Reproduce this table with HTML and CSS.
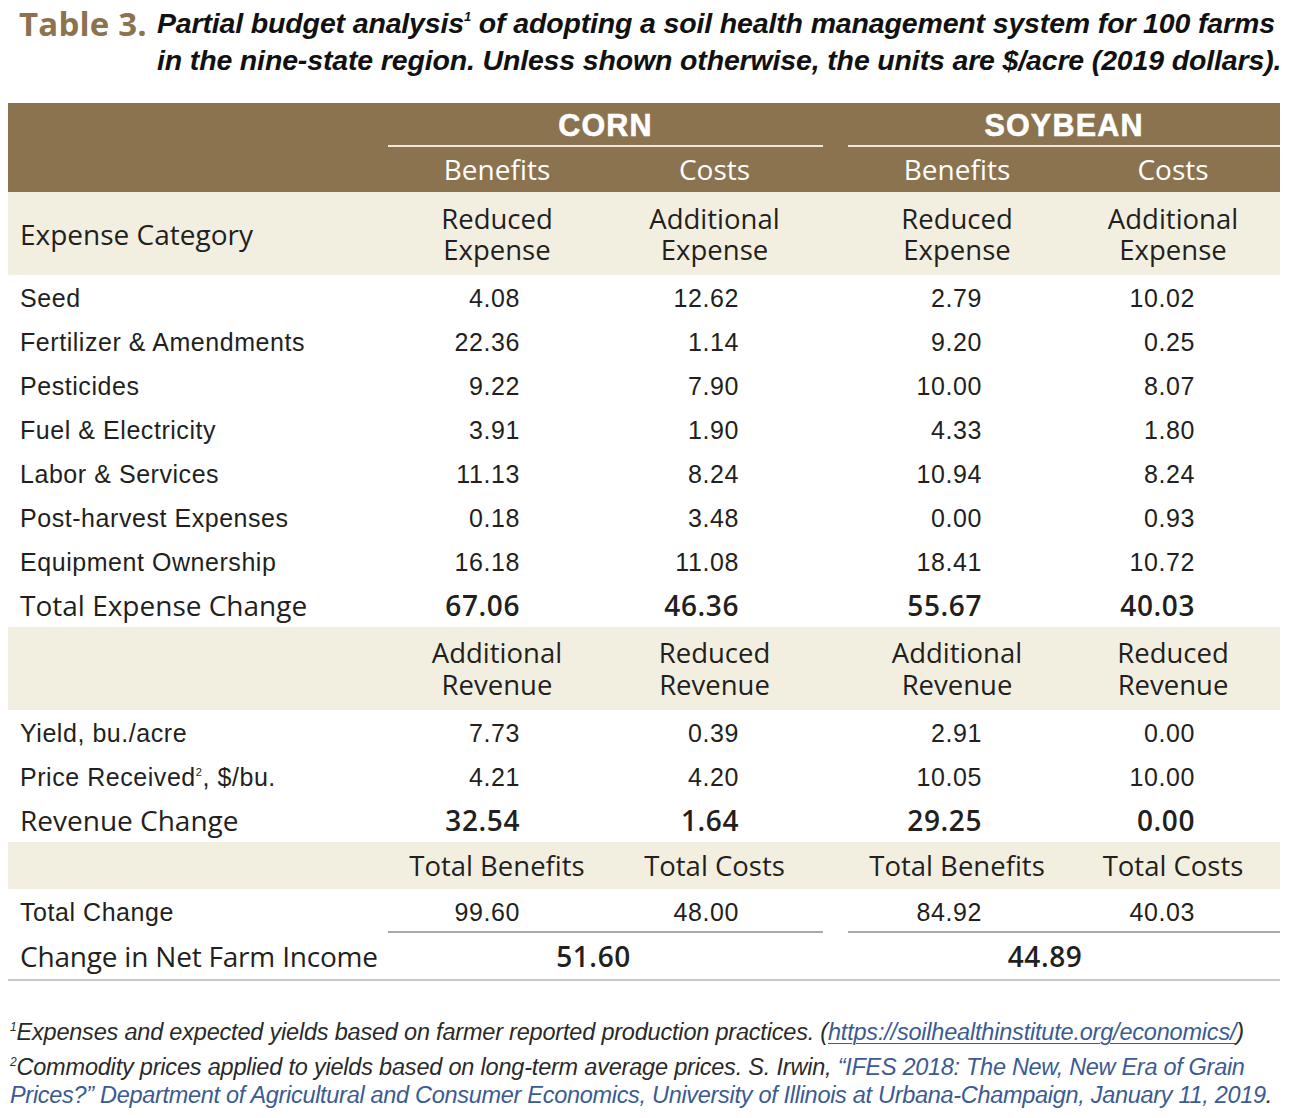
FILE: index.html
```html
<!DOCTYPE html>
<html lang="en">
<head>
<meta charset="utf-8">
<title>Table 3. Partial budget analysis</title>
<link rel="stylesheet" href="styles.css">
</head>
<body>
<div class="page">
  <header class="caption">
    <span class="caption-label">Table 3.</span>
    <span class="caption-text">
      <span class="caption-line">Partial budget analysis<sup>1</sup> of adopting a soil health management system for 100 farms</span>
      <span class="caption-line">in the nine-state region. Unless shown otherwise, the units are $/acre (2019 dollars).</span>
    </span>
  </header>

  <table class="budget">
    <colgroup>
      <col class="c-label">
      <col class="c-num1">
      <col class="c-num2">
      <col class="c-gap">
      <col class="c-num3">
      <col class="c-num4">
    </colgroup>
    <thead>
      <tr class="crop-row">
        <th></th>
        <th colspan="2" class="crop">CORN</th>
        <th></th>
        <th colspan="2" class="crop">SOYBEAN</th>
      </tr>
      <tr class="sub-row">
        <th></th>
        <th>Benefits</th>
        <th>Costs</th>
        <th></th>
        <th>Benefits</th>
        <th>Costs</th>
      </tr>
    </thead>
    <tbody>
      <tr class="band band-tall">
        <td class="label">Expense Category</td>
        <td>Reduced<br>Expense</td>
        <td>Additional<br>Expense</td>
        <td></td>
        <td>Reduced<br>Expense</td>
        <td>Additional<br>Expense</td>
      </tr>
      <tr class="data"><td class="label">Seed</td><td class="n1">4.08</td><td class="n2">12.62</td><td></td><td class="n3">2.79</td><td class="n4">10.02</td></tr>
      <tr class="data"><td class="label">Fertilizer &amp; Amendments</td><td class="n1">22.36</td><td class="n2">1.14</td><td></td><td class="n3">9.20</td><td class="n4">0.25</td></tr>
      <tr class="data"><td class="label">Pesticides</td><td class="n1">9.22</td><td class="n2">7.90</td><td></td><td class="n3">10.00</td><td class="n4">8.07</td></tr>
      <tr class="data"><td class="label">Fuel &amp; Electricity</td><td class="n1">3.91</td><td class="n2">1.90</td><td></td><td class="n3">4.33</td><td class="n4">1.80</td></tr>
      <tr class="data"><td class="label">Labor &amp; Services</td><td class="n1">11.13</td><td class="n2">8.24</td><td></td><td class="n3">10.94</td><td class="n4">8.24</td></tr>
      <tr class="data"><td class="label">Post-harvest Expenses</td><td class="n1">0.18</td><td class="n2">3.48</td><td></td><td class="n3">0.00</td><td class="n4">0.93</td></tr>
      <tr class="data"><td class="label">Equipment Ownership</td><td class="n1">16.18</td><td class="n2">11.08</td><td></td><td class="n3">18.41</td><td class="n4">10.72</td></tr>
      <tr class="data total"><td class="label">Total Expense Change</td><td class="n1">67.06</td><td class="n2">46.36</td><td></td><td class="n3">55.67</td><td class="n4">40.03</td></tr>

      <tr class="band band-tall band-rev">
        <td class="label"></td>
        <td>Additional<br>Revenue</td>
        <td>Reduced<br>Revenue</td>
        <td></td>
        <td>Additional<br>Revenue</td>
        <td>Reduced<br>Revenue</td>
      </tr>
      <tr class="data"><td class="label">Yield, bu./acre</td><td class="n1">7.73</td><td class="n2">0.39</td><td></td><td class="n3">2.91</td><td class="n4">0.00</td></tr>
      <tr class="data"><td class="label">Price Received<sup>2</sup>, $/bu.</td><td class="n1">4.21</td><td class="n2">4.20</td><td></td><td class="n3">10.05</td><td class="n4">10.00</td></tr>
      <tr class="data total"><td class="label">Revenue Change</td><td class="n1">32.54</td><td class="n2">1.64</td><td></td><td class="n3">29.25</td><td class="n4">0.00</td></tr>

      <tr class="band band-short">
        <td class="label"></td>
        <td>Total Benefits</td>
        <td>Total Costs</td>
        <td></td>
        <td>Total Benefits</td>
        <td>Total Costs</td>
      </tr>
      <tr class="data change"><td class="label">Total Change</td><td class="n1 ruled">99.60</td><td class="n2 ruled">48.00</td><td></td><td class="n3 ruled">84.92</td><td class="n4 ruled">40.03</td></tr>
      <tr class="net"><td class="label">Change in Net Farm Income</td><td colspan="2" class="net-corn">51.60</td><td></td><td colspan="2" class="net-soy">44.89</td></tr>
    </tbody>
  </table>

  <footer class="notes">
    <p class="note"><sup>1</sup>Expenses and expected yields based on farmer reported production practices. (<a class="link underline" href="#">https://soilhealthinstitute.org/economics/</a>)</p>
    <p class="note"><sup>2</sup>Commodity prices applied to yields based on long-term average prices. S. Irwin, <span class="link">“IFES 2018: The New, New Era of Grain<br>Prices?” Department of Agricultural and Consumer Economics, University of Illinois at Urbana-Champaign, January 11, 2019</span>.</p>
  </footer>
</div>
</body>
</html>
```

FILE: styles.css
```css
html, body {
  margin: 0;
  padding: 0;
  background: #ffffff;
}

body {
  color: #231f20;
  font-family: "Liberation Sans", Arial, sans-serif;
}

.page {
  width: 1290px;
  padding: 0 8px;
  box-sizing: border-box;
}

/* Caption */
.caption {
  display: flex;
  align-items: flex-start;
  height: 103px;
  padding-top: 5px;
  box-sizing: border-box;
}

.caption-label {
  font-family: "Open Sans", sans-serif;
  font-weight: 700;
  font-size: 33px;
  line-height: 37px;
  height: 37px;
  color: #8b734f;
  padding-left: 11px;
  width: 138px;
  flex: none;
  white-space: nowrap;
  letter-spacing: 0.2px;
}

.caption-text {
  display: flex;
  flex-direction: column;
  font-family: "Liberation Sans", sans-serif;
  font-style: italic;
  font-weight: 700;
  font-size: 28.5px;
  color: #111;
  white-space: nowrap;
  letter-spacing: -0.15px;
}

.caption-line {
  display: block;
  height: 37px;
  line-height: 37px;
}

.caption-text sup {
  font-size: 13px;
  line-height: 0;
  vertical-align: 0;
  position: relative;
  top: -12px;
}

/* Table */
.budget {
  width: 1272px;
  table-layout: fixed;
  border-collapse: collapse;
  border-spacing: 0;
}

.c-label { width: 380px; }
.c-num1 { width: 218px; }
.c-num2 { width: 217px; }
.c-gap { width: 25px; }
.c-num3 { width: 218px; }
.c-num4 { width: 214px; }

.budget th,
.budget td {
  padding: 0;
  border: 0;
  line-height: 1.2;
  box-sizing: border-box;
}

.budget thead th {
  background: #8b734f;
  color: #ffffff;
  font-weight: 400;
  text-align: center;
  vertical-align: middle;
}

.crop-row th {
  height: 44px;
}

.budget thead .crop-row th.crop {
  font-family: "Liberation Sans", sans-serif;
  font-weight: 700;
  font-size: 30.5px;
  letter-spacing: 1.2px;
  -webkit-text-stroke: 0.6px #ffffff;
  background: linear-gradient(#eee8da, #eee8da) left bottom / 100% 2px no-repeat, #8b734f;
  padding-top: 1px;
}

.sub-row th {
  height: 45px;
  font-family: "Open Sans", sans-serif;
  font-size: 28px;
}

/* beige bands */
.band td {
  background: #f3efe0;
  font-family: "Open Sans", sans-serif;
  font-size: 27.5px;
  text-align: center;
  vertical-align: middle;
}

.band-tall td {
  height: 83px;
  line-height: 31px;
}

.band-rev td {
  line-height: 32px;
}

.band-short td {
  height: 47px;
  line-height: 34px;
}

.band td.label {
  text-align: left;
  padding-left: 12px;
  padding-top: 2px;
  font-size: 28px;
}

/* data rows */
.data td {
  height: 44px;
  font-size: 25px;
  letter-spacing: 0.6px;
  vertical-align: middle;
  color: #231f20;
  padding-top: 1px;
}

.data td.label {
  padding-left: 12px;
  white-space: nowrap;
  letter-spacing: 0.55px;
}

.data sup {
  font-size: 11px;
  line-height: 0;
  vertical-align: 0;
  position: relative;
  top: -10px;
}

.n1 { text-align: right; padding-right: 86px !important; }
.n2 { text-align: right; padding-right: 84px !important; }
.n3 { text-align: right; padding-right: 84px !important; }
.n4 { text-align: right; padding-right: 85px !important; }

.data.total td {
  font-family: "Open Sans", sans-serif;
  font-size: 28px;
  font-weight: 400;
  letter-spacing: 0;
}

.data.total td.n1,
.data.total td.n2,
.data.total td.n3,
.data.total td.n4 {
  font-weight: 600;
  letter-spacing: 0.6px;
}

.change td.ruled {
  background: linear-gradient(#a9a9a9, #a9a9a9) left bottom / 100% 2px no-repeat;
}

.net td {
  height: 48px;
  font-family: "Open Sans", sans-serif;
  font-size: 28px;
  vertical-align: middle;
  background: linear-gradient(#c8c8c8, #c8c8c8) left bottom / 100% 2px no-repeat;
}

.net td.label {
  padding-left: 12px;
  white-space: nowrap;
  letter-spacing: -0.2px;
}

.net-corn,
.net-soy {
  text-align: center;
  font-weight: 600;
  letter-spacing: 0.6px;
}

.net-corn { padding-right: 24px !important; }
.net-soy { padding-right: 38px !important; }

/* notes */
.notes {
  padding-top: 37px;
  padding-left: 2px;
}

.note {
  margin: 0 0 7px 0;
  font-family: "Liberation Sans", sans-serif;
  font-style: italic;
  font-size: 23.5px;
  line-height: 28px;
  color: #2a2a2a;
  white-space: nowrap;
  letter-spacing: -0.2px;
}

.note sup {
  font-size: 12px;
  line-height: 0;
  vertical-align: 0;
  position: relative;
  top: -9px;
}

.link {
  color: #3b5b92;
  text-decoration: none;
  letter-spacing: -0.3px;
}

.link.underline {
  letter-spacing: -0.2px;
  text-decoration: underline;
  text-decoration-thickness: 1px;
  text-underline-offset: 3px;
}
```
